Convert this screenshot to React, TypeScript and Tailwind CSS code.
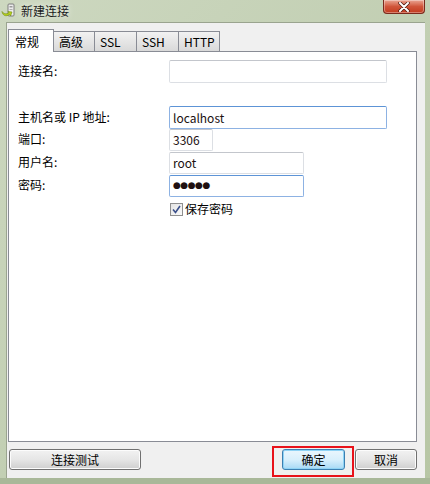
import React from "react";

const font = { fontFamily: '"Noto Sans CJK SC", "Noto Sans", sans-serif' };

function TitleIcon() {
  return (
    <svg width="16" height="16" viewBox="0 0 16 16">
      <rect x="7" y="1" width="6" height="12" rx="1" fill="#ececec" stroke="#7d7d7d" />
      <rect x="8.5" y="3" width="3" height="1.5" fill="#9a9a9a" />
      <rect x="8.5" y="6" width="3" height="1" fill="#b0b0b0" />
      <path d="M1 8.5 C1.5 12.5 5 14 8.5 11.5 L9.5 13 L11 9 L7 8.5 L7.8 9.8 C5.5 11.5 2.8 11 1 8.5 Z" fill="#b9d21c" stroke="#6f8a10" strokeWidth="0.6" />
    </svg>
  );
}

function CloseButton() {
  return (
    <div className="absolute right-[5px] top-0 flex h-[14px] w-[42px] items-center justify-center rounded-b-[4px] border border-t-0 border-[#7a2a1c] bg-gradient-to-b from-[#e9a593] via-[#d0553a] to-[#c23a1d] shadow-[inset_0_0_0_1px_rgba(255,255,255,0.35)]">
      <svg width="12" height="10" viewBox="0 0 12 10">
        <path d="M2 1 L10 9 M10 1 L2 9" stroke="#4a1a12" strokeWidth="3.4" strokeLinecap="round" />
        <path d="M2 1 L10 9 M10 1 L2 9" stroke="#ffffff" strokeWidth="2" strokeLinecap="round" />
      </svg>
    </div>
  );
}

function Tab({ label, active, width }: { label: string; active?: boolean; width: string }) {
  if (active) {
    return (
      <div className={`relative z-10 -mb-px flex h-[23px] ${width} items-start border border-b-0 border-[#898c95] bg-white pl-[6px] pt-[3px] text-[12px] text-black`}>
        {label}
      </div>
    );
  }
  return (
    <div className={`mt-[2px] flex h-[20px] ${width} items-start border border-l-0 border-b-0 border-[#898c95] bg-gradient-to-b from-[#f2f2f2] to-[#d9d9d9] pl-[5px] pt-[1px] text-[12px] text-black`}>
      {label}
    </div>
  );
}

function Field({ value, width, height, focus, mt }: { value?: React.ReactNode; width: string; height: string; focus?: boolean; mt: string }) {
  return (
    <div
      className={`${mt} ${width} ${height} flex items-center rounded-[2px] border bg-white pl-[3px] text-[12px] text-[#201010] ${
        focus ? "border-[#8db2e3] border-t-[#5d94d6]" : "border-[#dcdfe4] border-t-[#c3c6cc]"
      }`}
    >
      {value}
    </div>
  );
}

function Row({ label, children }: { label: string; children: React.ReactNode }) {
  return (
    <div className="flex items-end">
      <div className="w-[151px] pb-[3px] text-[12px] text-black">{label}</div>
      {children}
    </div>
  );
}

function Button({ label, width, primary }: { label: string; width: string; primary?: boolean }) {
  return (
    <div
      className={`flex h-[21px] ${width} items-center justify-center rounded-[3px] border text-[12px] text-black ${
        primary
          ? "border-[#3c7fb1] bg-gradient-to-b from-[#eaf6fd] via-[#d9f0fc] to-[#a7d9f5] shadow-[inset_0_0_0_1px_#8fd3f5]"
          : "border-[#707070] bg-gradient-to-b from-[#f2f2f2] via-[#e6e6e6] to-[#cfcfcf] shadow-[inset_0_0_0_1px_#fcfcfc]"
      }`}
    >
      {label}
    </div>
  );
}

export default function App() {
  return (
    <div className="relative h-[484px] w-[430px] overflow-hidden bg-gradient-to-br from-[#cdd8c0] via-[#c2cfb3] to-[#b7c6a5]" style={font}>
      {/* title bar */}
      <div className="relative flex h-[22px] items-center gap-[4px] pl-[1px]">
        <TitleIcon />
        <span className="text-[12px] text-[#1a1a1a] [text-shadow:0_0_6px_rgba(255,255,255,0.9)]">新建连接</span>
        <CloseButton />
      </div>

      {/* client area */}
      <div className="ml-[6px] flex h-[456px] w-[419px] flex-col border-l border-t border-[#9aa48f] bg-[#f0f0f0]">
        <div className="ml-[1px] mt-[6px] flex">
          <Tab label="常规" active width="w-[46px]" />
          <Tab label="高级" width="w-[41px]" />
          <Tab label="SSL" width="w-[42px]" />
          <Tab label="SSH" width="w-[42px]" />
          <Tab label="HTTP" width="w-[41px]" />
        </div>

        <div className="ml-[1px] h-[391px] w-[409px] border border-[#898c95] bg-white pl-[9px]">
          <Row label="连接名:">
            <Field mt="mt-[8px]" width="w-[218px]" height="h-[23px]" />
          </Row>
          <div className="h-[23px]" />
          <Row label="主机名或 IP 地址:">
            <Field mt="mt-0" width="w-[218px]" height="h-[23px]" value="localhost" focus />
          </Row>
          <Row label="端口:">
            <Field mt="mt-0" width="w-[44px]" height="h-[22px]" value="3306" />
          </Row>
          <Row label="用户名:">
            <Field mt="mt-[1px]" width="w-[135px]" height="h-[22px]" value="root" />
          </Row>
          <Row label="密码:">
            <Field
              mt="mt-[1px]"
              width="w-[135px]"
              height="h-[22px]"
              focus
              value={<span className="text-[9px] tracking-[-0.5px]" style={{ fontFamily: '"DejaVu Sans", sans-serif' }}>●●●●●</span>}
            />
          </Row>
          <div className="ml-[152px] mt-[3px] flex items-center gap-[2px]">
            <div className="flex h-[13px] w-[13px] items-center justify-center border border-[#8f8f8f] bg-gradient-to-br from-[#e4e4e4] to-[#fafafa]">
              <svg width="9" height="9" viewBox="0 0 9 9">
                <path d="M1 4.5 L3.5 7.5 L8 1" fill="none" stroke="#3a4f8a" strokeWidth="1.6" />
              </svg>
            </div>
            <span className="text-[12px] text-black">保存密码</span>
          </div>
        </div>

        <div className="relative mt-[7px] flex items-center">
          <div className="ml-[2px]">
            <Button label="连接测试" width="w-[132px]" />
          </div>
          <div className="ml-auto mr-[8px] flex gap-[10px]">
            <Button label="确定" width="w-[63px]" primary />
            <Button label="取消" width="w-[62px]" />
          </div>
          {/* red annotation box */}
          <div className="pointer-events-none absolute left-[265px] top-[-3px] h-[31px] w-[82px] border-2 border-[#e8121a]" />
        </div>
      </div>
      <div className="h-[6px] bg-[#a9b899]" />
    </div>
  );
}
